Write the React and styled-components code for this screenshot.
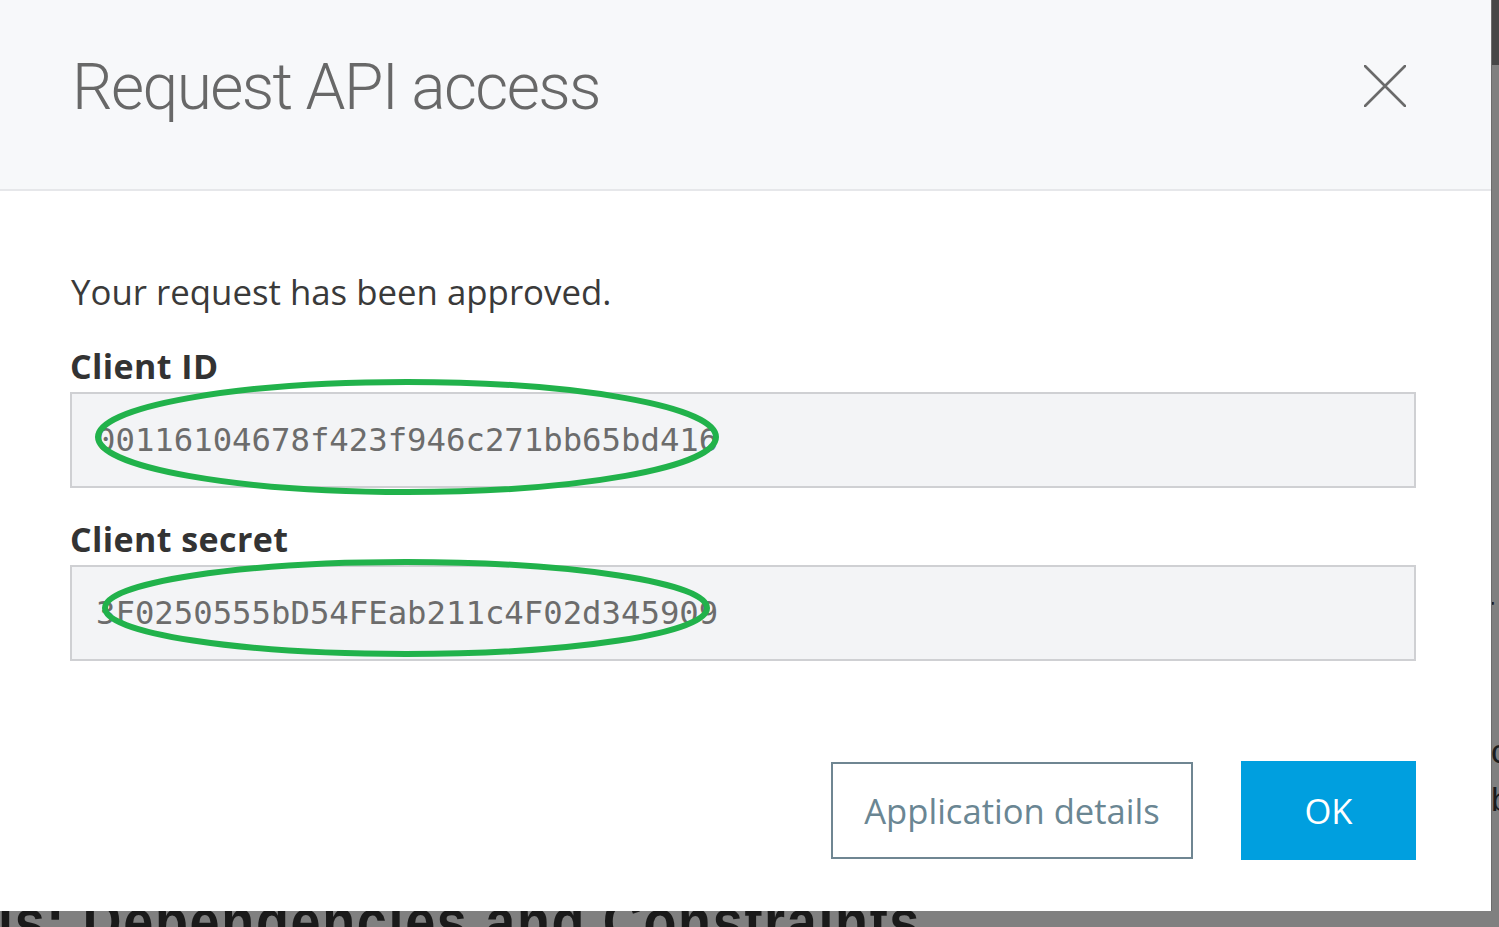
import React from "react";
import styled, { createGlobalStyle } from "styled-components";

const GlobalStyle = createGlobalStyle`
  *, *::before, *::after { box-sizing: border-box; }
  html, body {
    margin: 0;
    padding: 0;
    background: #808080;
    overflow: hidden;
  }
  body {
    width: 1499px;
    height: 927px;
  }
`;

const Page = styled.div`
  display: flex;
  flex-direction: column;
  width: 1499px;
  height: 927px;
`;

const TopRow = styled.div`
  display: flex;
`;

const Modal = styled.section`
  position: relative;
  width: 1491px;
  height: 911px;
  background: #ffffff;
  display: flex;
  flex-direction: column;
  font-family: "Open Sans", "Noto Sans", sans-serif;
`;

const Header = styled.header`
  height: 191px;
  background: #f7f8fa;
  border-bottom: 2px solid #e6e7ea;
  display: flex;
  justify-content: space-between;
  align-items: flex-start;
  padding: 56px 85px 0 72px;
`;

const Title = styled.h2`
  margin: 0;
  font-family: Roboto, "Noto Sans", sans-serif;
  font-weight: 300;
  font-size: 64px;
  line-height: 1;
  color: #686868;
  letter-spacing: -1.6px;
`;

const CloseButton = styled.button`
  margin-top: 9px;
  width: 42px;
  height: 42px;
  padding: 0;
  border: none;
  background: transparent;
  cursor: pointer;
  display: flex;
`;

const Body = styled.div`
  flex: 1;
  display: flex;
  flex-direction: column;
  padding: 80px 75px 51px 70px;
`;

const Message = styled.p`
  margin: 0 0 34px 1px;
  font-size: 34.8px;
  line-height: 1.2;
  color: #3a3a3a;
`;

const Field = styled.div`
  display: flex;
  flex-direction: column;
  gap: 6px;
  & + & {
    margin-top: 32px;
  }
`;

const Label = styled.label`
  font-size: 34px;
  font-weight: 700;
  line-height: 1.15;
  color: #333333;
  letter-spacing: 0.4px;
`;

const KeyBox = styled.div`
  height: 96px;
  background: #f3f4f6;
  border: 2px solid #cfd0d3;
  display: flex;
  align-items: center;
  padding: 0 0 0 24px;
  font-family: "DejaVu Sans Mono", "Liberation Mono", monospace;
  font-size: 32.3px;
  color: #6c6c6c;
  white-space: nowrap;
`;

const Footer = styled.div`
  margin-top: auto;
  display: flex;
  justify-content: flex-end;
  align-items: center;
  gap: 48px;
`;

const Button = styled.button`
  height: ${(p) => (p.$primary ? "99px" : "97px")};
  width: ${(p) => (p.$primary ? "175px" : "362px")};
  padding: 0;
  font-family: "Open Sans", "Noto Sans", sans-serif;
  font-size: 34.6px;
  cursor: pointer;
  background: ${(p) => (p.$primary ? "#009fdf" : "#ffffff")};
  color: ${(p) => (p.$primary ? "#ffffff" : "#6a8693")};
  border: ${(p) => (p.$primary ? "none" : "2px solid #6f8692")};
`;

const Annotation = styled.svg`
  position: absolute;
  left: 0;
  top: 0;
  width: 100%;
  height: 100%;
  pointer-events: none;
`;

const Strip = styled.div`
  flex: 1;
  display: flex;
  flex-direction: column;
  overflow: hidden;
  border-left: 1px solid #6c6c6c;
`;

const StripTop = styled.div`
  height: 65px;
  background: #474747;
`;

const Fragment = styled.span`
  display: block;
  margin-top: ${(p) => p.$top}px;
  margin-left: ${(p) => p.$shift}px;
  font-family: "Liberation Sans", Arial, sans-serif;
  font-size: 34px;
  line-height: 1;
  height: 34px;
  color: #1c1c1c;
`;

const Behind = styled.div`
  height: 16px;
  overflow: hidden;
`;

const BehindHeading = styled.h1`
  margin: -21px 0 0 -2px;
  font-family: "Liberation Sans", Arial, sans-serif;
  font-weight: 700;
  font-size: 54px;
  line-height: 1;
  color: #1a1a1a;
  white-space: nowrap;
  letter-spacing: 1.65px;
  transform: scaleY(1.15);
  transform-origin: top left;
`;

export default function App() {
  return (
    <>
      <GlobalStyle />
      <Page>
        <TopRow>
          <Modal>
            <Header>
              <Title>Request API access</Title>
              <CloseButton aria-label="Close">
                <svg width="42" height="42" viewBox="0 0 42 42">
                  <path
                    d="M1 1 L41 41 M41 1 L1 41"
                    stroke="#6a6a6a"
                    strokeWidth="2.6"
                    strokeLinecap="round"
                  />
                </svg>
              </CloseButton>
            </Header>
            <Body>
              <Message>Your request has been approved.</Message>
              <Field>
                <Label>Client ID</Label>
                <KeyBox>00116104678f423f946c271bb65bd416</KeyBox>
              </Field>
              <Field>
                <Label>Client secret</Label>
                <KeyBox>3F0250555bD54FEab211c4F02d345909</KeyBox>
              </Field>
              <Footer>
                <Button>Application details</Button>
                <Button $primary>OK</Button>
              </Footer>
            </Body>
            <Annotation viewBox="0 0 1491 911">
              <ellipse
                cx="407"
                cy="437"
                rx="309"
                ry="55"
                fill="none"
                stroke="#21b24b"
                strokeWidth="6"
              />
              <ellipse
                cx="406"
                cy="608"
                rx="301"
                ry="46"
                fill="none"
                stroke="#21b24b"
                strokeWidth="6"
              />
            </Annotation>
          </Modal>
          <Strip>
            <StripTop />
            <Fragment $top={526} $shift={-9}>r</Fragment>
            <Fragment $top={109} $shift={-1}>c</Fragment>
            <Fragment $top={14} $shift={-1}>b</Fragment>
          </Strip>
        </TopRow>
        <Behind>
          <BehindHeading>ls: Dependencies and Constraints</BehindHeading>
        </Behind>
      </Page>
    </>
  );
}
